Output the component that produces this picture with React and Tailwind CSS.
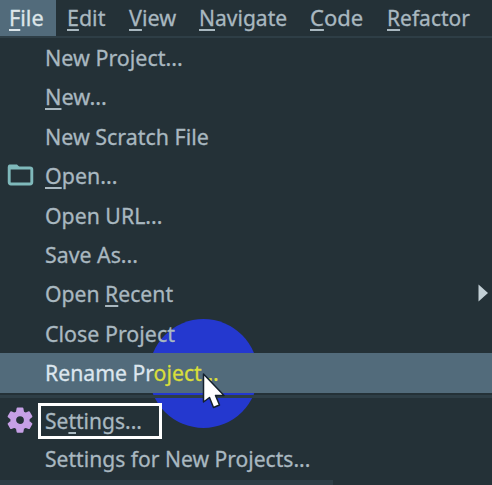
import React, { useLayoutEffect, useRef } from 'react';

// Condenses a label horizontally so that it fills the given width.
function Label({ width, children, className = '' }) {
  const ref = useRef(null);
  useLayoutEffect(() => {
    const el = ref.current;
    const fit = () => {
      el.style.transform = `scaleX(${width / el.offsetWidth})`;
    };
    fit();
    document.fonts.ready.then(fit);
  }, [width]);
  return (
    <span ref={ref} className={`inline-block origin-left whitespace-pre [-webkit-text-stroke:0.3px] ${className}`}>
      {children}
    </span>
  );
}

function Key({ children }) {
  return (
    <span className="underline decoration-2 underline-offset-[3px] [text-decoration-skip-ink:none]">{children}</span>
  );
}

function MenuTab({ boxWidth, width, active, children }) {
  return (
    <div
      style={{ width: boxWidth }}
      className={`h-[36px] shrink-0 pl-[9px] leading-[34px] ${active ? 'bg-[#526b7b] text-[#dce6ea]' : ''}`}
    >
      <Label width={width}>{children}</Label>
    </div>
  );
}

function Row({ width, icon, arrow, children, className = '' }) {
  return (
    <div className={`relative flex h-[39.4px] shrink-0 items-center leading-[39.4px] ${className}`}>
      <div className="flex w-[45px] shrink-0 items-center pl-[7px]">{icon}</div>
      <div className="min-w-0 flex-1">
        <Label width={width}>{children}</Label>
      </div>
      {arrow && (
        <svg width="10" height="18" viewBox="0 0 10 18" className="mr-[4px] mb-[3px] shrink-0">
          <path d="M0.5 0.5L10 9L0.5 17.5Z" fill="#c3d0d6" />
        </svg>
      )}
    </div>
  );
}

const folder = (
  <svg width="27" height="22" viewBox="0 0 27 22" className="mb-[1px]">
    <path d="M2.200 4V18Q2.200 20 4 20H23Q24.800 20 24.800 18V5.500Q24.800 4 23 4Z" fill="none" stroke="#7fb9bb" strokeWidth="2.900" />
    <path d="M1 5V2Q1 .5 2.500 .5H10L13 3.500V5Z" fill="#7fb9bb" />
  </svg>
);

const gear = (
  <svg width="26" height="26" viewBox="0 0 26 26">
    <path
      fillRule="evenodd"
      fill="#c6a0e6"
      stroke="#c6a0e6"
      strokeWidth="1.8"
      strokeLinejoin="round"
      d="M10.500 1.500h5l.7 3.700 2.300 1.300 3.500-1.300 2.500 4.300-2.800 2.400v2.600l2.800 2.400-2.500 4.300-3.500-1.300-2.300 1.300-.7 3.600h-5l-.7-3.600-2.300-1.300-3.500 1.300-2.500-4.300 2.800-2.400v-2.600L1.500 9.500 4 5.200l3.500 1.300 2.300-1.300ZM13 8.300a4.800 4.800 0 1 0 0 9.600a4.800 4.800 0 1 0 0-9.600Z"
    />
  </svg>
);

export default function App() {
  return (
    <div className="relative isolate flex h-[485px] w-[492px] flex-col overflow-hidden bg-[#243137] font-['Noto_Sans',sans-serif] text-[22px] text-[#a9b8c0]">
      <div className="flex h-[36px] shrink-0">
        <MenuTab boxWidth={56} width={34.5} active><Key>F</Key>ile</MenuTab>
        <div className="w-[2px]" />
        <MenuTab boxWidth={62} width={38}><Key>E</Key>dit</MenuTab>
        <MenuTab boxWidth={70} width={47}><Key>V</Key>iew</MenuTab>
        <MenuTab boxWidth={111} width={88}><Key>N</Key>avigate</MenuTab>
        <MenuTab boxWidth={77} width={53}><Key>C</Key>ode</MenuTab>
        <MenuTab boxWidth={100} width={83}><Key>R</Key>efactor</MenuTab>
      </div>
      <div className="h-[2px] shrink-0 bg-[#2e3e46]" />

      <div className="absolute left-[148.500px] top-[319px] -z-10 size-[109px] rounded-full bg-[#2438cf]" />

      <Row width={137.5}>New Project...</Row>
      <Row width={62}><Key>N</Key>ew...</Row>
      <Row width={163.5}>New Scratch File</Row>
      <Row width={72} icon={folder}><Key>O</Key>pen...</Row>
      <Row width={117}>Open URL...</Row>
      <Row width={93}>Save As...</Row>
      <Row width={128} arrow>Open <Key>R</Key>ecent</Row>
      <Row width={129.5}>Close Project</Row>
      <Row width={173.5} className="bg-[#526b7b] text-[#dce6ee]">
        Rename Pr<span className="text-[#d9de3b]">oject...</span>
      </Row>
      <div className="h-[7.400px] shrink-0 pt-[2px]">
        <div className="h-[3px] bg-[#2e3e46]" />
      </div>
      <div className="relative flex h-[39.400px] shrink-0 items-center">
        <div className="w-[38px] shrink-0 pl-[7px]">{gear}</div>
        <div className="mt-[2px] h-[36px] w-[124px] border-[3px] border-white bg-[#243137] pl-[4px] leading-[28px]">
          <Label width={96.5}>Se<Key>t</Key>tings...</Label>
        </div>
      </div>
      <Row width={265.5}>Settings for New Projects...</Row>
      <div className="mt-[1.500px] h-[5px] w-[333px] shrink-0 bg-[#2e3e46]" />

      <svg width="24" height="38" viewBox="0 0 24 38" className="absolute left-[202px] top-[372px]">
        <path
          d="M1.500 2V30L7.500 25.500L11.500 35.500L17.500 33L13.500 23.500H22Z"
          fill="#fff"
          stroke="#14202c"
          strokeWidth="1.500"
          strokeLinejoin="round"
        />
      </svg>
    </div>
  );
}
